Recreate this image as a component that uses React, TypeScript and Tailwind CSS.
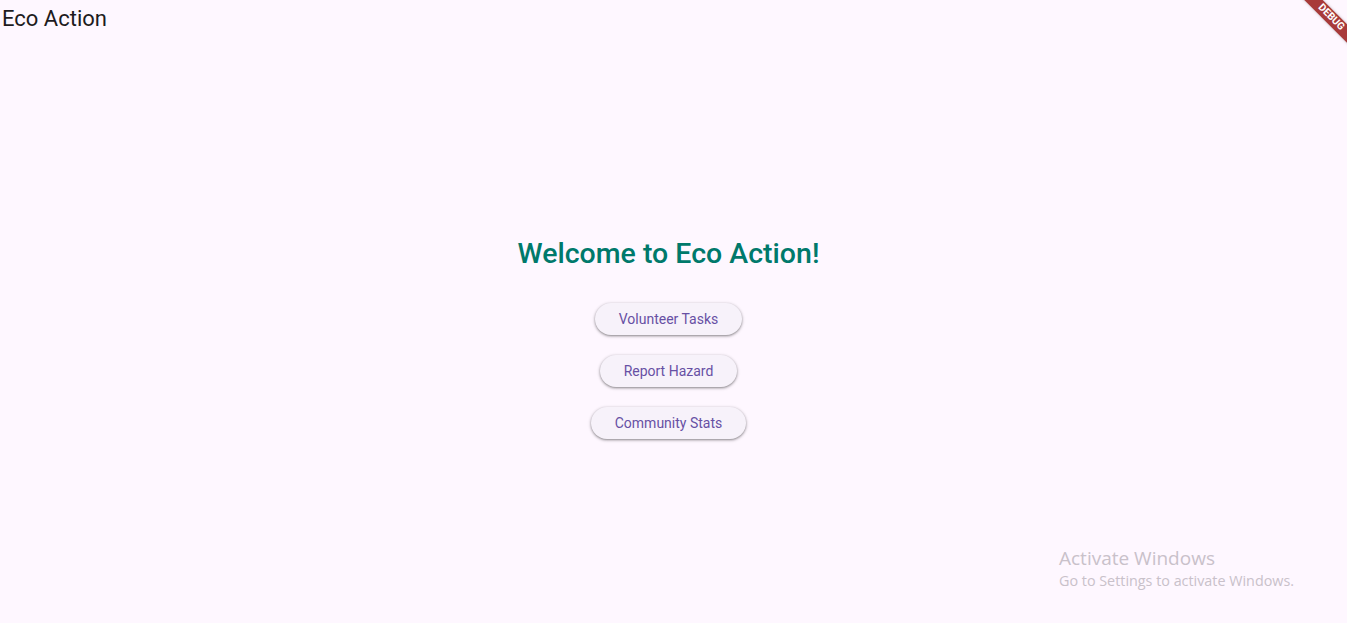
import React from "react";

export default function App() {
  const btn =
    "h-8 px-6 rounded-full bg-[#f7f2fa] text-[#6750a4] text-[14px] font-normal leading-none shadow-[0_1px_2px_rgba(0,0,0,0.3),0_1px_3px_1px_rgba(0,0,0,0.15)]";
  return (
    <div
      className="relative w-[1347px] h-[623px] bg-[#fef7ff] overflow-hidden"
      style={{ fontFamily: "Roboto, 'Noto Sans', sans-serif" }}
    >
      <div className="absolute left-[2px] top-[5px] text-[22px] leading-[28px] text-[#1d1b20]">Eco Action</div>
      <div className="w-[1337px] flex flex-col items-center pt-[236px]">
        <h1 className="text-[28.5px] leading-[36px] font-medium text-[#00796b]">Welcome to Eco Action!</h1>
        <div className="flex flex-col items-center gap-5 mt-[31px]">
          <button className={btn}>Volunteer Tasks</button>
          <button className={btn}>Report Hazard</button>
          <button className={btn}>Community Stats</button>
        </div>
      </div>
      <div className="absolute left-[1059px] top-[545px] text-[#c9c1ca]" style={{ fontFamily: "'Open Sans', 'Noto Sans', sans-serif" }}>
        <div className="text-[19px] leading-[26px]">Activate Windows</div>
        <div className="text-[14.35px] leading-[20px]">Go to Settings to activate Windows.</div>
      </div>
      <div className="absolute -right-[44px] top-[10.5px] w-[120px] h-[13px] bg-[#a83a3a] rotate-45 flex items-center justify-center shadow-[0_0_3px_rgba(0,0,0,0.25)]">
        <span className="text-white text-[10.2px] font-bold leading-none">DEBUG</span>
      </div>
    </div>
  );
}
